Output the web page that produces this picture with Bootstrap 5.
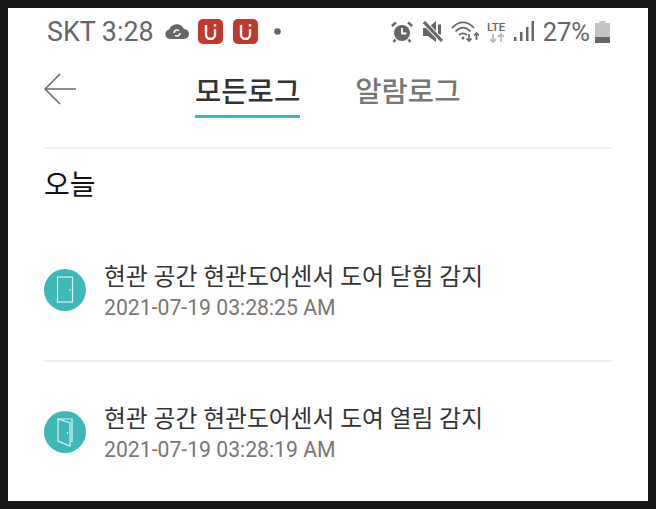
<!DOCTYPE html>
<html lang="ko">
<head>
  <meta charset="UTF-8">
  <meta name="viewport" content="width=device-width, initial-scale=1.0">
  <title>모든로그</title>
  <link href="https://cdn.jsdelivr.net/npm/bootstrap@5.3.2/dist/css/bootstrap.min.css" rel="stylesheet">
  <style>
    html, body { height: 100%; }
    body {
      background-color: #181818;
      padding: 8px;
      font-family: Roboto, "Noto Sans CJK KR", sans-serif;
      overflow: hidden;
    }
    .phone-screen {
      height: 493px;
      background-color: #fff;
      padding: 0 36px;
    }
    .status-bar {
      height: 47px;
      padding: 0 2px 0 3px;
      color: #666;
      font-size: 26.8px;
      line-height: 32px;
    }
    .status-pct { font-size: 25.5px; margin-left: 9px; margin-right: 5px; }
    .status-cloud { margin-left: 11px; margin-right: 9px; }
    .status-tile-gap { margin-left: 10px; }
    .dot-gap { margin-left: 16px; }
    .mute-gap { margin-left: 10px; }
    .signal-gap { margin-left: 7px; }
    .app-tile {
      width: 25px;
      height: 25px;
      border-radius: 5px;
      background-color: #c0392f;
    }
    .header-row {
      height: 92px;
    }
    .back-btn {
      width: 32px;
      height: 32px;
      margin-top: 18px;
    }
    .tab-group {
      gap: 55px;
      margin-left: 119px;
      margin-top: 15px;
    }
    .log-tab {
      font-size: 28.6px;
      font-weight: 500;
      line-height: 44px;
      height: 48px;
      color: #777;
    }
    .log-tab.is-active {
      color: #333;
      border-bottom: 3px solid #3db8b6;
    }
    .rule {
      border-top: 2px solid #eee;
    }
    .day-label {
      font-size: 28px;
      line-height: 36px;
      color: #111;
      margin-top: 19px;
      margin-bottom: 49px;
    }
    .log-row {
      gap: 18px;
      height: 74px;
    }
    .door-badge {
      width: 42px;
      height: 42px;
      border-radius: 50%;
      background-color: #3db8b6;
    }
    .log-text {
      padding-top: 4px;
    }
    .log-title {
      font-size: 23.75px;
      line-height: 32px;
      color: #333;
    }
    .log-time {
      font-size: 21.2px;
      line-height: 30px;
      color: #777;
    }
    .rule-mid {
      margin-top: 33px;
      margin-bottom: 33px;
    }
  </style>
</head>
<body>
  <div class="phone-screen">
    <!-- Status bar -->
    <div class="status-bar d-flex align-items-center">
      <span>SKT 3:28</span>
      <svg class="status-cloud" width="24" height="15" viewBox="0 0 24 15" fill="#666">
        <path d="M5 15a4.800 4.800 0 0 1-.8-9.500A8 8 0 0 1 19 5a5 5 0 0 1 0 10z"/>
        <path d="M9 9a3 3 0 0 1 5-2.200M15 9a3 3 0 0 1-5 2.200" fill="none" stroke="#fff" stroke-width="1.500"/>
      </svg>
      <div class="app-tile d-flex align-items-center justify-content-center">
        <svg width="13" height="17" viewBox="0 0 13 17" fill="none" stroke="#fff" stroke-width="2.400">
          <path d="M2 2v9.500a4.500 4.500 0 0 0 9 0V6"/><path d="M11 1v2.500"/>
        </svg>
      </div>
      <div class="app-tile d-flex align-items-center justify-content-center status-tile-gap">
        <svg width="13" height="17" viewBox="0 0 13 17" fill="none" stroke="#fff" stroke-width="2.400">
          <path d="M2 2v9.500a4.500 4.500 0 0 0 9 0V6"/><path d="M11 1v2.500"/>
        </svg>
      </div>
      <svg class="dot-gap" width="7" height="7" viewBox="0 0 7 7" fill="#666"><circle cx="3.500" cy="3.500" r="3.300"/></svg>

      <div class="d-flex align-items-center ms-auto">
        <!-- alarm -->
        <svg width="22" height="22" viewBox="0 0 22 22">
          <circle cx="11" cy="12" r="8" fill="#666"/>
          <path d="M11 7v5.500h4.500" fill="none" stroke="#fff" stroke-width="1.800"/>
          <path d="M.8 5 5 1.500M21.200 5 17 1.500M4.500 18.500 2.500 21M17.500 18.500 19.500 21" stroke="#666" stroke-width="2.400" fill="none"/>
        </svg>
        <!-- mute -->
        <svg class="mute-gap" width="20" height="21" viewBox="0 0 20 21" fill="#666">
          <path d="M0 7h5l8-7v21l-8-6H0z"/>
          <path d="M15 3.500h3v10h-3z"/>
          <path d="M0 0l19 20" stroke="#fff" stroke-width="5"/>
          <path d="M1 1l18 19" stroke="#666" stroke-width="3"/>
        </svg>
        <!-- wifi -->
        <svg class="ms-2" width="28" height="22" viewBox="0 0 28 22" fill="none" stroke="#666" stroke-width="1.700">
          <path d="M1 7c7-7.500 15-7.500 22 0"/>
          <path d="M4.500 10.500c5-5 10-5 15 0"/>
          <path d="M8 14c3-2.500 5-2.500 8 0"/>
          <circle cx="12" cy="17" r="1.500" fill="#666" stroke="none"/>
          <path d="M18 13v7m-2.500-2.500L18 20l2.500-2.500M25.500 19v-7M23 14.500l2.500-2.500 2.500 2.500"/>
        </svg>
        <!-- LTE -->
        <svg class="ms-2" width="20" height="22" viewBox="0 0 20 22">
          <text x="0" y="10" font-family="Roboto, sans-serif" font-size="11.500" font-weight="500" fill="#666">LTE</text>
          <path d="M6 13v8m-3-3 3 3 3-3M14 21v-8m-3 3 3-3 3 3" fill="none" stroke="#bbb" stroke-width="1.800"/>
        </svg>
        <!-- signal -->
        <svg class="signal-gap" width="20" height="21" viewBox="0 0 20 21" fill="#666">
          <rect x="0" y="16" width="2.500" height="4"/>
          <rect x="6" y="11" width="2.500" height="9"/>
          <rect x="12" y="6" width="2.500" height="14"/>
          <rect x="17.500" y="0" width="2.500" height="20"/>
        </svg>
        <span class="status-pct">27%</span>
        <!-- battery -->
        <svg width="15" height="22" viewBox="0 0 15 22">
          <path d="M4.500 0h6v2H15v20H0V2h4.500z" fill="#c4c4c4"/>
          <rect x="0" y="16" width="15" height="6" fill="#666"/>
        </svg>
      </div>
    </div>

    <!-- Header with tabs -->
    <div class="header-row d-flex align-items-start">
      <svg class="back-btn flex-shrink-0" viewBox="0 0 32 32" fill="none" stroke="#666" stroke-width="1.500">
        <path d="M32 16H1M16 1 1 16l15 15"/>
      </svg>
      <div class="tab-group d-flex">
        <div class="log-tab is-active">모든로그</div>
        <div class="log-tab">알람로그</div>
      </div>
    </div>
    <div class="rule"></div>

    <div class="day-label">오늘</div>

    <!-- Log rows -->
    <div class="log-row d-flex align-items-center">
      <div class="door-badge d-flex align-items-center justify-content-center flex-shrink-0">
        <svg width="18" height="28" viewBox="0 0 18 28" fill="none" stroke="#d9f3f2" stroke-width="1.200">
          <rect x="1.500" y="1" width="15" height="25"/>
          <path d="M14 13v2"/>
        </svg>
      </div>
      <div class="log-text">
        <div class="log-title">현관 공간 현관도어센서 도어 닫힘 감지</div>
        <div class="log-time">2021-07-19 03:28:25 AM</div>
      </div>
    </div>
    <div class="rule rule-mid"></div>
    <div class="log-row d-flex align-items-center">
      <div class="door-badge d-flex align-items-center justify-content-center flex-shrink-0">
        <svg width="18" height="30" viewBox="0 0 18 30" fill="none" stroke="#d9f3f2" stroke-width="1.200">
          <path d="M2 2h14v23"/>
          <path d="M2 2v22l12 5V6z"/>
          <path d="M11.500 15v2"/>
        </svg>
      </div>
      <div class="log-text">
        <div class="log-title">현관 공간 현관도어센서 도여 열림 감지</div>
        <div class="log-time">2021-07-19 03:28:19 AM</div>
      </div>
    </div>
  </div>

  <script src="https://cdn.jsdelivr.net/npm/bootstrap@5.3.2/dist/js/bootstrap.bundle.min.js"></script>
</body>
</html>
